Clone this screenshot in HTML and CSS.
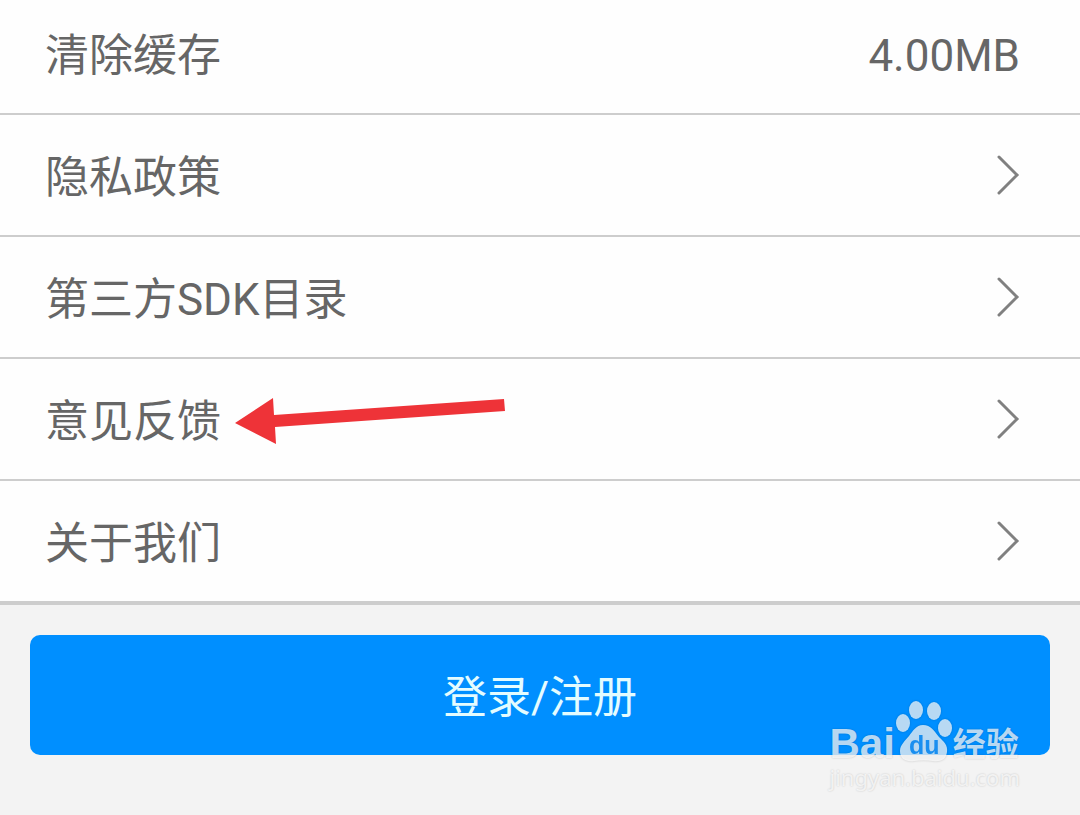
FILE: index.html
```html
<!DOCTYPE html>
<html lang="zh-CN">
<head>
    <meta charset="UTF-8">
    <meta name="viewport" content="width=device-width, initial-scale=1.0">
    <title>设置</title>
    <link rel="stylesheet" href="styles.css">
</head>
<body>
    <nav class="menu">
        <button type="button" class="row row-first">
            <span class="label">清除缓存</span>
            <span class="label">4.00MB</span>
        </button>
        <a class="row" href="#privacy">
            <span class="label">隐私政策</span>
            <svg class="chevron" viewBox="0 0 24 42" aria-hidden="true"><path d="M3 3L21 21L3 39"/></svg>
        </a>
        <a class="row" href="#sdk">
            <span class="label">第三方SDK目录</span>
            <svg class="chevron" viewBox="0 0 24 42" aria-hidden="true"><path d="M3 3L21 21L3 39"/></svg>
        </a>
        <a class="row" href="#feedback">
            <span class="label">意见反馈</span>
            <svg class="arrow" viewBox="0 0 270 46" aria-hidden="true"><path d="M0 25L38 0L39 17L269 1L270 13L40 29L41 46Z"/></svg>
            <svg class="chevron" viewBox="0 0 24 42" aria-hidden="true"><path d="M3 3L21 21L3 39"/></svg>
        </a>
        <a class="row" href="#about">
            <span class="label">关于我们</span>
            <svg class="chevron" viewBox="0 0 24 42" aria-hidden="true"><path d="M3 3L21 21L3 39"/></svg>
        </a>
    </nav>

    <div class="footer">
        <button type="button" class="login-btn">登录/注册</button>
    </div>

    <div class="watermark">
        <div class="brand">
            <span class="bai">Bai</span>
            <svg class="paw" viewBox="0 0 58 62" aria-hidden="true">
                <ellipse cx="8" cy="23" rx="7" ry="9"/>
                <ellipse cx="21" cy="10" rx="7" ry="9"/>
                <ellipse cx="39" cy="11" rx="7" ry="9"/>
                <ellipse cx="50" cy="28" rx="7" ry="9"/>
                <path d="M28 25C36 25 39 31 44 37C49 42 53 45 52 52C51 60 45 62 38 61C32 60 25 60 19 61C11 62 5 59 5 51C5 45 10 41 14 36C18 31 21 25 28 25Z"/>
                <text x="14" y="54">du</text>
            </svg>
            <span class="jingyan">经验</span>
        </div>
        <div class="site">jingyan.baidu.com</div>
    </div>
</body>
</html>
```
FILE: styles.css
```css
body {
    margin: 0;
    background-color: #f3f3f3;
    font-family: Roboto, "Noto Sans CJK SC", sans-serif;
    color: #666;
}
.menu {
    background-color: #fefefe;
    border-bottom: 2px solid #cdcdcd;
}
.row {
    display: flex;
    position: relative;
    justify-content: space-between;
    align-items: center;
    box-sizing: border-box;
    width: 100%;
    padding: 30px 60px 30px 45px;
    border: none;
    border-bottom: 2px solid #cdcdcd;
    background: none;
    color: inherit;
    font-family: inherit;
    font-size: 44px;
    line-height: 54px;
    text-decoration: none;
    cursor: pointer;
}
.row-first {
    padding-top: 23px;
}
.label {
    padding-top: 6px;
}
.chevron {
    width: 24px;
    height: 42px;
    fill: none;
    stroke: #808080;
    stroke-width: 3;
    stroke-linecap: round;
}
/* red pointer beside the feedback row */
.arrow {
    position: absolute;
    left: 235px;
    top: 39px;
    width: 270px;
    height: 46px;
    fill: #ee3338;
}
.footer {
    padding: 30px;
}
.login-btn {
    display: block;
    width: 100%;
    padding: 36px 30px 30px;
    border: none;
    border-radius: 10px;
    background-color: #008fff;
    color: #e4fcff;
    font-family: inherit;
    font-size: 44px;
    line-height: 54px;
    cursor: pointer;
}
.watermark {
    position: absolute;
    right: 60px;
    top: 700px;
    color: rgba(255, 255, 255, 0.72);
    text-shadow: 0 0 2px rgba(0, 0, 0, 0.2);
    pointer-events: none;
}
.brand {
    display: flex;
    align-items: flex-end;
    height: 62px;
}
.bai {
    font-family: "Liberation Sans", Arial, sans-serif;
    font-size: 42px;
    font-weight: bold;
    line-height: 36px;
}
.paw {
    width: 58px;
    height: 62px;
    fill: rgba(255, 255, 255, 0.72);
    filter: drop-shadow(0 0 1px rgba(0, 0, 0, 0.25));
}
.paw text {
    fill: #1a8ff0;
    font-family: "Liberation Sans", Arial, sans-serif;
    font-size: 25px;
    font-weight: bold;
    text-shadow: none;
}
.jingyan {
    font-size: 33px;
    font-weight: bold;
    line-height: 34px;
}
.site {
    font-family: "Noto Sans", sans-serif;
    font-size: 22px;
    line-height: 30px;
}
```
